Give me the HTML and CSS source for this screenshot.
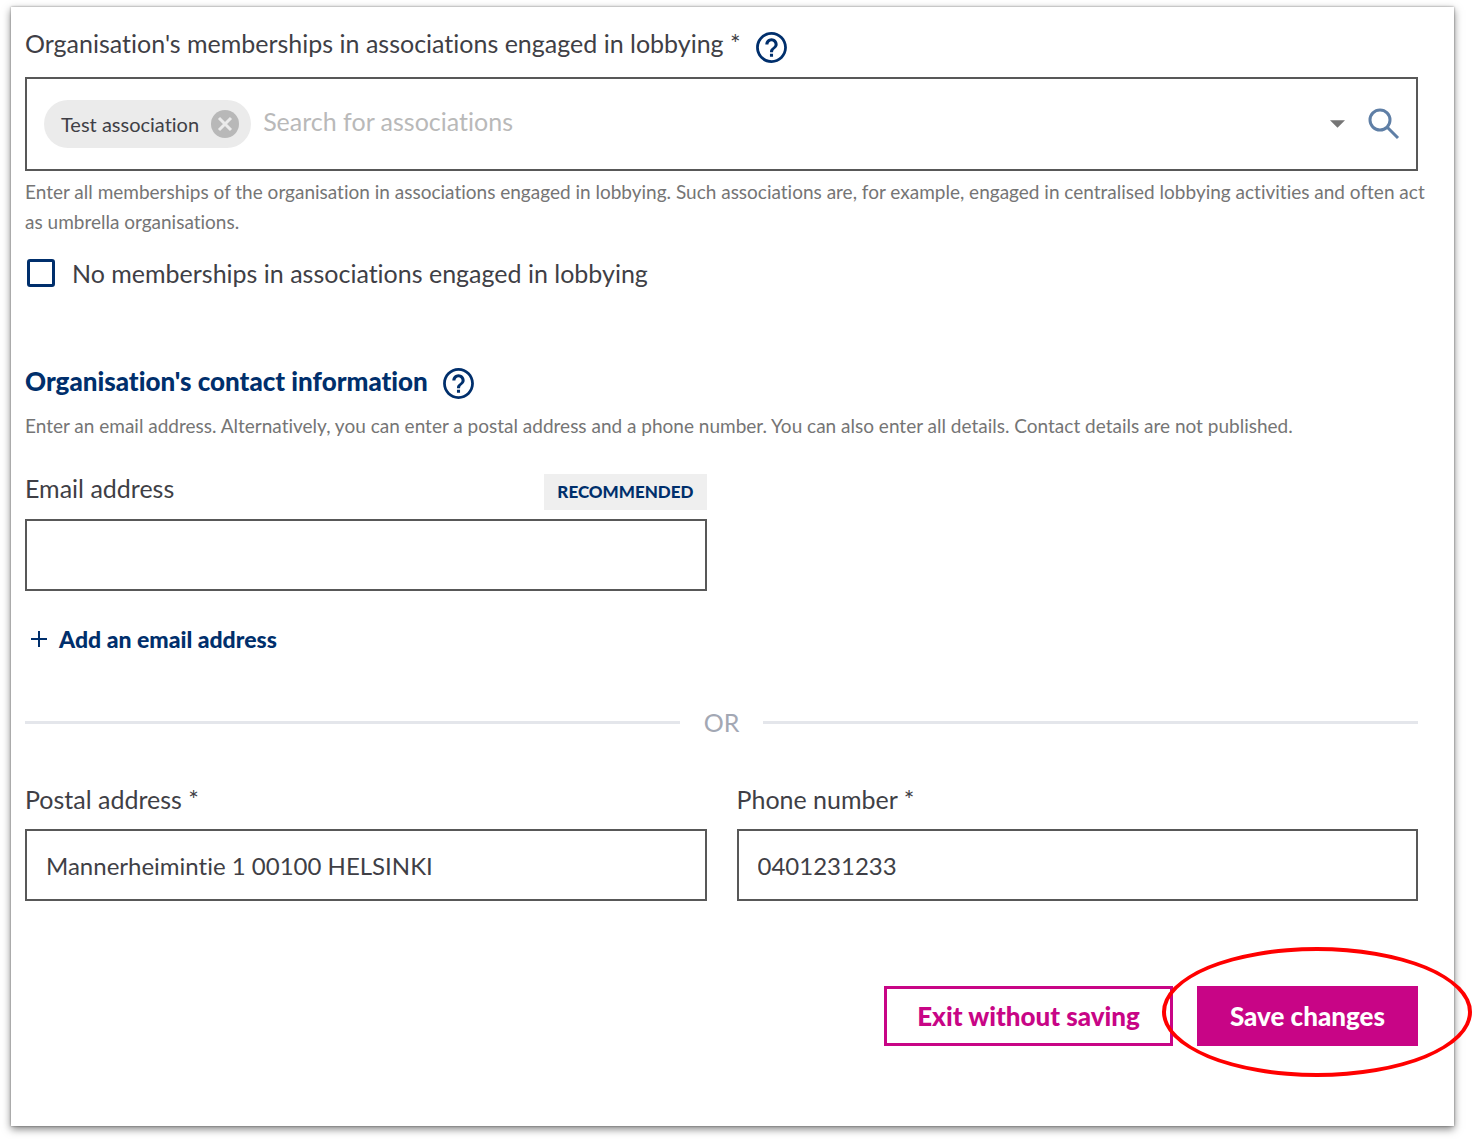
FILE: index.html
```html
<!DOCTYPE html>
<html lang="en">
<head>
<meta charset="UTF-8">
<meta name="viewport" content="width=device-width, initial-scale=1.0">
<title>Organisation's details</title>
<link rel="stylesheet" href="styles.css">
</head>
<body>

<form class="card">
    <section class="memberships">
        <div class="label-row">
            <label for="associations">Organisation's memberships in associations engaged in lobbying *</label>
            <button type="button" class="help-btn" aria-label="Help on memberships">
                <svg viewBox="0 0 24 24"><path d="M11 18h2v-2h-2v2zm1-16C6.480 2 2 6.480 2 12s4.480 10 10 10 10-4.480 10-10S17.520 2 12 2zm0 18.200c-4.520 0-8.200-3.680-8.200-8.200S7.480 3.800 12 3.800s8.200 3.680 8.200 8.200-3.680 8.200-8.200 8.200zm0-14.200c-2.210 0-4 1.790-4 4h2c0-1.100.9-2 2-2s2 .9 2 2c0 2-3 1.750-3 5h2c0-2.250 3-2.500 3-5 0-2.210-1.790-4-4-4z"/></svg>
            </button>
        </div>
        <div class="search-box">
            <span class="chip">
                Test association
                <button type="button" class="chip-remove" aria-label="Remove Test association">
                    <svg viewBox="0 0 28 28"><circle cx="14" cy="14" r="14"/><path d="M8 8l12 12M20 8L8 20"/></svg>
                </button>
            </span>
            <input type="text" id="associations" class="search-input" placeholder="Search for associations">
            <button type="button" class="icon-btn arrow" aria-label="Open list">
                <svg viewBox="0 0 16 8"><path d="M0 0h16L8 8z"/></svg>
            </button>
            <button type="button" class="icon-btn search" aria-label="Search">
                <svg viewBox="0 0 32 32"><circle cx="12" cy="12" r="10"/><path d="M19 19l11 11"/></svg>
            </button>
        </div>
        <p class="hint">Enter all memberships of the organisation in associations engaged in lobbying. Such associations are, for example, engaged in centralised lobbying activities and often act as umbrella organisations.</p>
        <label class="check-row">
            <input type="checkbox" class="checkbox">
            No memberships in associations engaged in lobbying
        </label>
    </section>

    <section class="contact">
        <div class="label-row">
            <h2>Organisation's contact information</h2>
            <button type="button" class="help-btn" aria-label="Help on contact information">
                <svg viewBox="0 0 24 24"><path d="M11 18h2v-2h-2v2zm1-16C6.480 2 2 6.480 2 12s4.480 10 10 10 10-4.480 10-10S17.520 2 12 2zm0 18.200c-4.520 0-8.200-3.680-8.200-8.200S7.480 3.800 12 3.800s8.200 3.680 8.200 8.200-3.680 8.200-8.200 8.200zm0-14.200c-2.210 0-4 1.790-4 4h2c0-1.100.9-2 2-2s2 .9 2 2c0 2-3 1.750-3 5h2c0-2.250 3-2.500 3-5 0-2.210-1.790-4-4-4z"/></svg>
            </button>
        </div>
        <p class="hint contact-hint">Enter an email address. Alternatively, you can enter a postal address and a phone number. You can also enter all details. Contact details are not published.</p>

        <div class="columns">
            <div>
                <div class="email-label">
                    <label for="email">Email address</label>
                    <span class="badge">RECOMMENDED</span>
                </div>
                <input type="email" id="email" class="text-input">
                <button type="button" class="add-btn">
                    <svg viewBox="0 0 16 16"><path d="M8 0v16M0 8h16"/></svg>
                    Add an email address
                </button>
            </div>
        </div>

        <div class="divider">OR</div>

        <div class="columns">
            <div>
                <label for="postal" class="field-label">Postal address *</label>
                <input type="text" id="postal" class="text-input" value="Mannerheimintie 1 00100 HELSINKI">
            </div>
            <div>
                <label for="phone" class="field-label">Phone number *</label>
                <input type="tel" id="phone" class="text-input" value="0401231233">
            </div>
        </div>
    </section>

    <div class="actions">
        <button type="button" class="btn btn-outline">Exit without saving</button>
        <div class="highlight">
            <button type="submit" class="btn btn-primary">Save changes</button>
        </div>
    </div>
</form>

</body>
</html>
```

FILE: styles.css
```css
* {
    box-sizing: border-box;
}

body {
    margin: 0;
    padding: 7px 18px 13px 11px;
    background-color: #fff;
    font-family: Lato, "Liberation Sans", sans-serif;
    font-size: 25px;
    font-variant-ligatures: none;
    line-height: 32px;
    color: #3f3f46;
}

button,
input {
    font: inherit;
    font-variant-ligatures: none;
    color: inherit;
}

button {
    padding: 0;
    border: none;
    background: none;
    cursor: pointer;
}

svg {
    display: block;
}

label {
    line-height: 28px;
}

.card {
    padding: 22px 36px 80px 14px;
    background-color: #fff;
    box-shadow: 0 0 2px rgba(0, 0, 0, 0.4), 0 3px 8px rgba(0, 0, 0, 0.5);
}

.label-row {
    display: flex;
    gap: 12px;
    height: 36px;
}

h2 {
    margin: 0;
    font-size: 26px;
    font-weight: 900;
    color: #002f6c;
}

.help-btn svg {
    width: 37px;
    height: 37px;
    fill: #002f6c;
}

/* Association search */
.search-box {
    display: flex;
    align-items: center;
    height: 94px;
    margin-top: 12px;
    padding: 0 16px 0 17px;
    border: 2px solid #585858;
}

.chip {
    display: flex;
    align-items: center;
    gap: 12px;
    height: 48px;
    padding: 0 12px 0 17px;
    border-radius: 24px;
    background-color: #ebebeb;
    font-size: 20px;
}

.chip-remove svg {
    width: 28px;
    height: 28px;
    fill: #b8b8b8;
    stroke: #ebebeb;
    stroke-width: 3;
}

.chip-remove circle {
    stroke: none;
}

.search-input {
    flex: 1;
    min-width: 0;
    padding: 0 12px 6px;
    border: none;
    outline: none;
    background: none;
}

.search-input::placeholder {
    color: #b9b9b9;
    opacity: 1;
}

.arrow svg {
    width: 15px;
    height: 8px;
    fill: #757575;
}

.search {
    margin-left: 23px;
}

.search svg {
    width: 32px;
    height: 32px;
    fill: none;
    stroke: #5f7fa6;
    stroke-width: 3;
}

.hint {
    margin: 6px -20px 0 0;
    font-size: 19px;
    line-height: 30px;
    color: #757575;
}

.check-row {
    display: flex;
    align-items: center;
    gap: 17px;
    height: 34px;
    margin-top: 19px;
}

.checkbox {
    appearance: none;
    width: 28px;
    height: 28px;
    margin: 0 0 0 2px;
    border: 3px solid #002f6c;
    border-radius: 3px;
}

/* Contact information */
.contact {
    margin-top: 75px;
}

.contact-hint {
    margin: 10px 0 33px;
}

.columns {
    display: grid;
    grid-template-columns: 1fr 1fr;
    gap: 30px;
}

.email-label {
    display: flex;
    justify-content: space-between;
    align-items: flex-start;
    margin-bottom: 9px;
}

.badge {
    padding: 2px 13px;
    background-color: #efefef;
    font-size: 17px;
    font-weight: 900;
    color: #002f6c;
}

.field-label {
    display: block;
    margin-bottom: 16px;
}

.text-input {
    display: block;
    width: 100%;
    height: 72px;
    padding: 0 19px;
    border: 2px solid #585858;
    border-radius: 0;
    background-color: #fff;
    font-size: 24px;
}

.add-btn {
    display: flex;
    align-items: center;
    gap: 12px;
    margin-top: 32px;
    padding: 0 6px;
    font-size: 23px;
    font-weight: 900;
    color: #002f6c;
}

.add-btn svg {
    width: 16px;
    height: 16px;
    stroke: #002f6c;
    stroke-width: 2;
}

.divider {
    display: flex;
    align-items: center;
    gap: 24px;
    margin: 51px 0 47px;
    color: #a3a8b4;
}

.divider::before,
.divider::after {
    content: "";
    flex: 1;
    height: 3px;
    background-color: #e4e6eb;
}

/* Buttons */
.actions {
    display: flex;
    justify-content: flex-end;
    gap: 24px;
    margin-top: 85px;
}

.btn {
    height: 60px;
    padding: 0 30px;
    border: 3px solid #c80586;
    font-size: 26px;
    font-weight: 900;
}

.btn-outline {
    color: #c80586;
}

.btn-primary {
    background-color: #c80586;
    color: #fff;
}

.highlight {
    position: relative;
}

/* Red ring round the save button */
.highlight::after {
    content: "";
    position: absolute;
    inset: -39px -54px -31px -35px;
    border: 4px solid #f00;
    border-radius: 50%;
    pointer-events: none;
}
```
